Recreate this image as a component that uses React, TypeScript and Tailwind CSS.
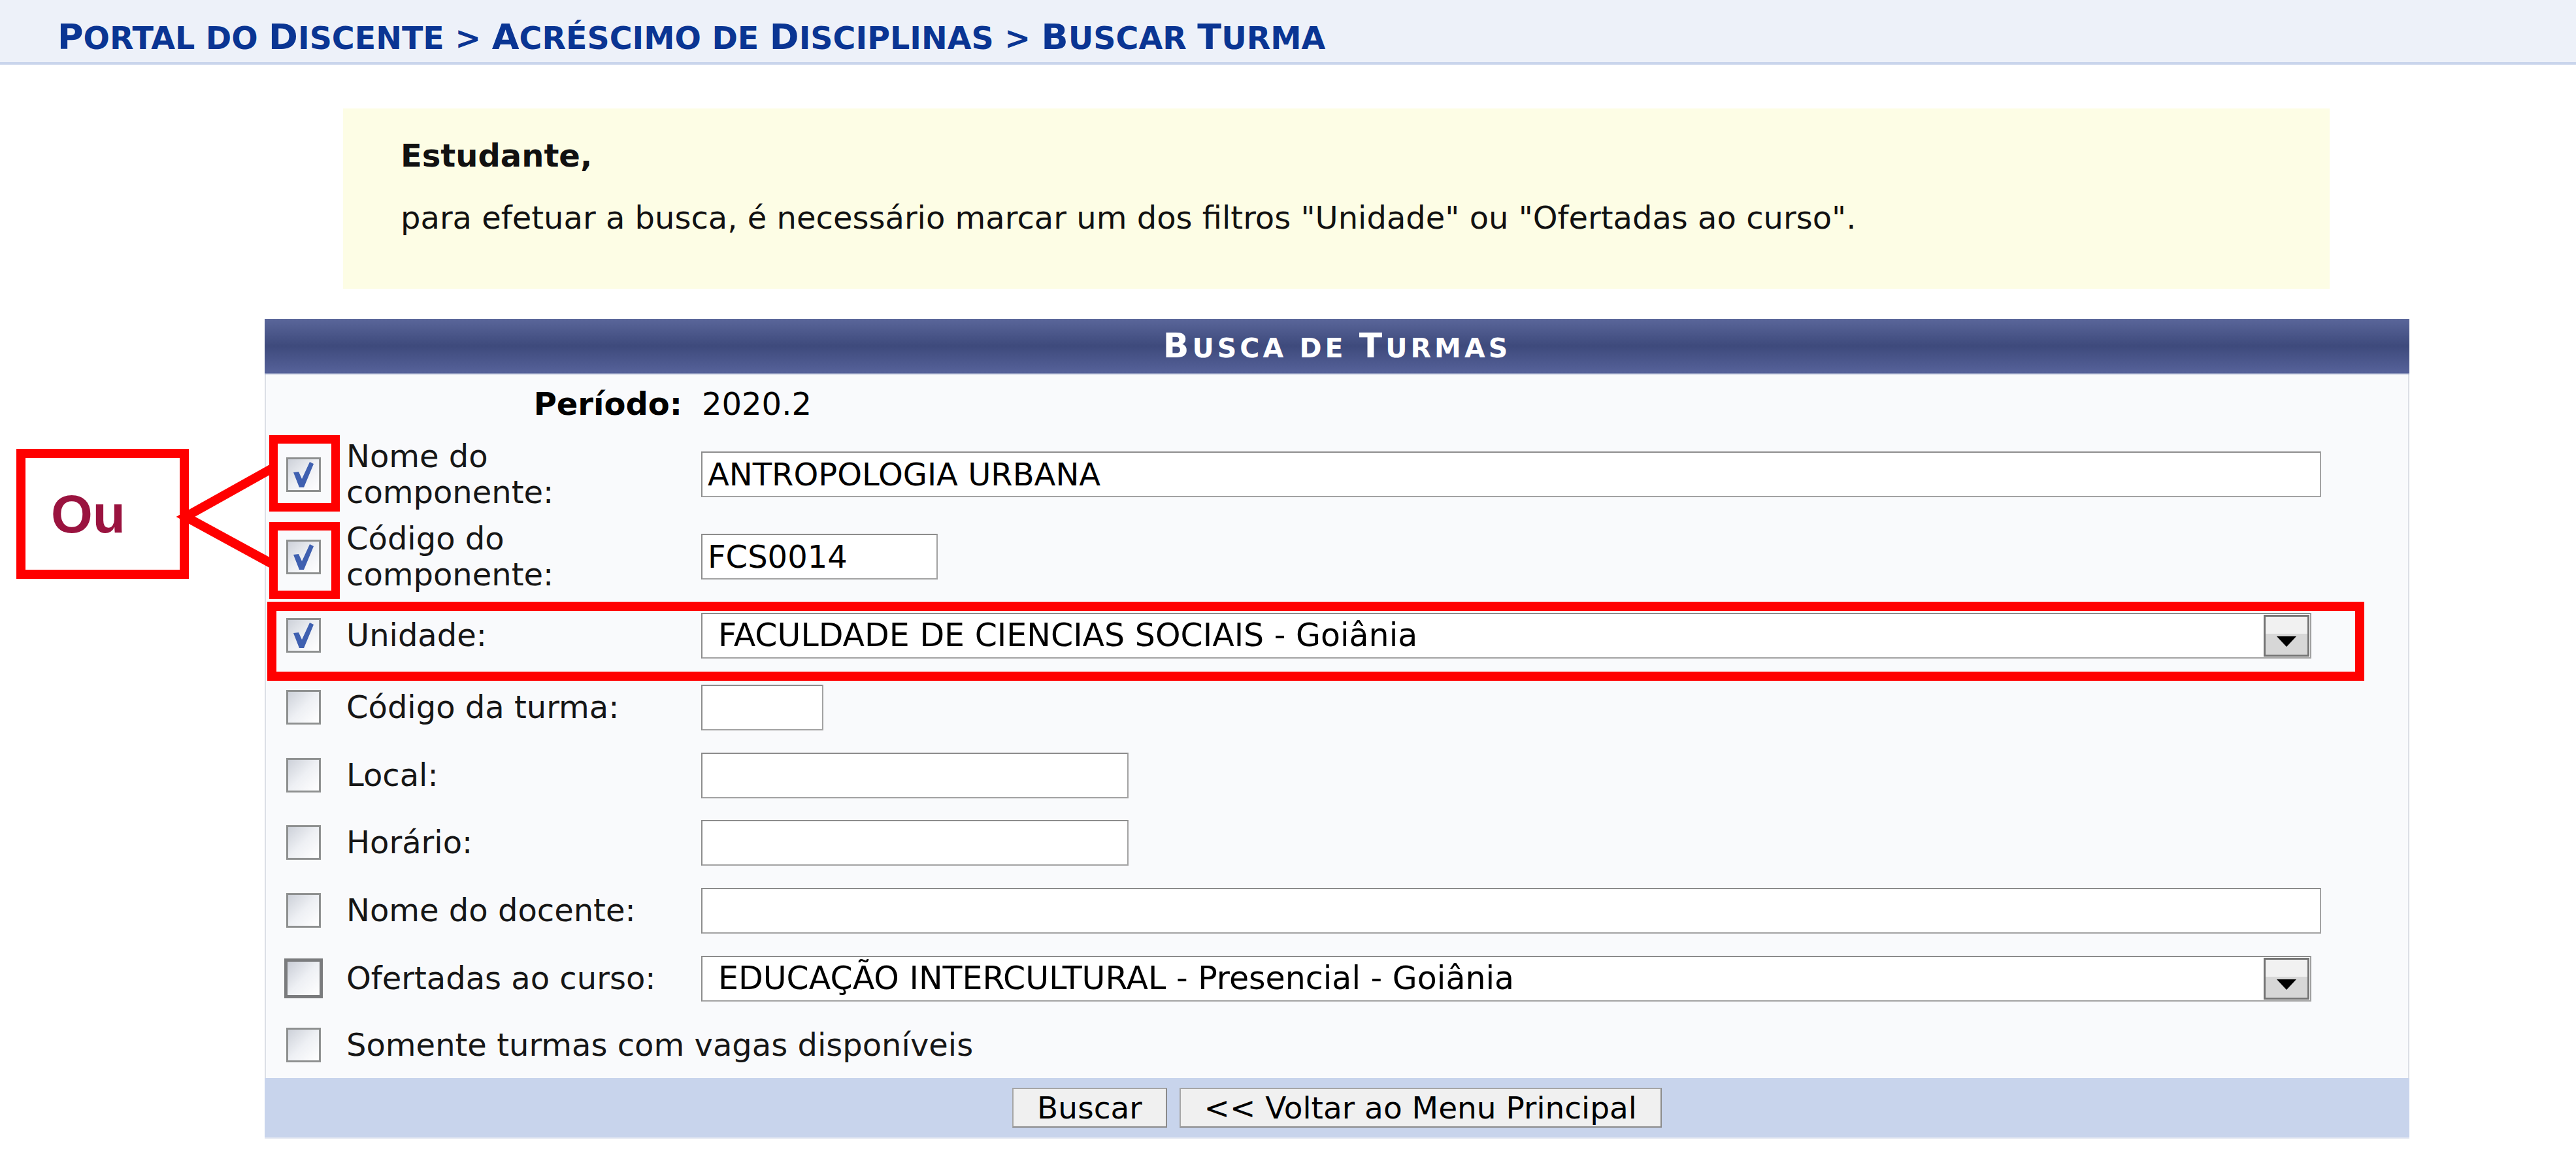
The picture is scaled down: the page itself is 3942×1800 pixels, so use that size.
import React from "react";

// small caps made by hand: capitals stay big, the rest become smaller capitals
function SmallCaps({ text, big, small }: { text: string; big: string; small: string }) {
  return (
    <>
      {text.split("").map((ch, i) =>
        ch !== ch.toLowerCase() ? (
          <span key={i} className={big}>
            {ch}
          </span>
        ) : (
          <span key={i} className={small}>
            {ch.toUpperCase()}
          </span>
        )
      )}
    </>
  );
}

function Check({ checked, focus }: { checked?: boolean; focus?: boolean }) {
  return (
    <div className="w-[53px] flex justify-center shrink-0">
      <div
        className={
          focus
            ? "relative shrink-0 w-[59px] h-[61px] border-[5px] border-[#7A7B7D] bg-gradient-to-br from-[#C9CDD6] via-[#EEF0F4] to-white"
            : "relative shrink-0 w-[53px] h-[53px] border-[3px] border-[#8E9090] bg-gradient-to-br from-[#CDD1D9] via-[#EEF0F4] to-white"
        }
      >
        {checked && (
          <svg viewBox="0 0 47 47" className="absolute inset-0 w-full h-full">
            <polygon points="8,20 16,19 21,30 33,4 39,7 24,43 17,43" fill="#3F60B0" />
          </svg>
        )}
      </div>
    </div>
  );
}

function TextInput({ width, value }: { width: string; value?: string }) {
  return (
    <div className={`${width} h-[70px] shrink-0 bg-white border-2 border-[#A2A2A2] border-t-[#8C8C8C] border-l-[#8C8C8C] flex items-center pl-[8px] text-[48px] text-black`}>
      {value}
    </div>
  );
}

function Select({ value }: { value: string }) {
  return (
    <div className="w-[2464px] h-[70px] shrink-0 bg-white border-2 border-[#A2A2A2] border-t-[#8C8C8C] border-l-[#8C8C8C] flex items-center">
      <div className="flex-1 pl-[24px] text-[49px] text-black whitespace-nowrap">{value}</div>
      <div className="w-[70px] h-[64px] mr-[1px] border-[3px] border-[#747474] flex flex-col">
        <div className="h-[26px] bg-[#F1F1F1]" />
        <div className="flex-1 bg-[#D7D7D7] flex items-start justify-center pt-[4px]">
          <svg width="30" height="16" viewBox="0 0 30 16">
            <polygon points="0,0 30,0 15,16" fill="#000" />
          </svg>
        </div>
      </div>
    </div>
  );
}

function Row({ h, children }: { h: string; children: React.ReactNode }) {
  return <div className={`flex items-center pl-[31px] ${h}`}>{children}</div>;
}

function Label({ children }: { children: React.ReactNode }) {
  return <div className="ml-[39px] w-[520px] mr-[23px] shrink-0 text-[48px] leading-[55px] text-[#161616]">{children}</div>;
}

export default function App() {
  return (
    <div className="relative w-[3942px] min-h-screen bg-white font-['DejaVu_Sans',Verdana,sans-serif] text-black">
      {/* breadcrumb */}
      <div className="h-[99px] bg-[#EDF1F9] border-b-[4px] border-[#C9D5EC] pl-[88px] pt-[27px]">
        <div className="font-bold text-[54px] leading-[60px] text-[#0A3593] whitespace-nowrap">
          <SmallCaps text="Portal do Discente > Acréscimo de Disciplinas > Buscar Turma" big="text-[54px]" small="text-[47.5px]" />
        </div>
      </div>

      {/* aviso */}
      <div className="ml-[525px] mt-[67px] w-[3040px] h-[276px] bg-[#FDFDE5] pl-[88px] pt-[44px] text-[48px] leading-[56px] text-[#111]">
        <div className="font-bold">Estudante,</div>
        <div className="mt-[39px]">
          para efetuar a busca, é necessário marcar um dos filtros "Unidade" ou "Ofertadas ao curso".
        </div>
      </div>

      {/* formulario */}
      <div className="ml-[405px] mt-[46px] w-[3282px]">
        <div className="h-[85px] bg-gradient-to-b from-[#5A669A] via-[#3E4A7C] to-[#56629A] border-b-2 border-[#8C96BC] text-center text-white font-bold text-[52px] leading-[83px] tracking-[5px]">
          <SmallCaps text="Busca de Turmas" big="text-[52px]" small="text-[41px]" />
        </div>
        <div className="bg-[#F9FAFC] border-x-2 border-[#DCDFE6]">
          <div className="flex items-center h-[90px] text-[48px]">
            <div className="w-[637px] text-right font-bold">Período:</div>
            <div className="ml-[30px]">2020.2</div>
          </div>
          <Row h="h-[126px]">
            <Check checked />
            <Label>Nome do componente:</Label>
            <TextInput width="w-[2479px]" value="ANTROPOLOGIA URBANA" />
          </Row>
          <Row h="h-[126px]">
            <Check checked />
            <Label>Código do componente:</Label>
            <TextInput width="w-[362px]" value="FCS0014" />
          </Row>
          <Row h="h-[115px]">
            <Check checked />
            <Label>Unidade:</Label>
            <Select value="FACULDADE DE CIENCIAS SOCIAIS - Goiânia" />
          </Row>
          <Row h="h-[105px]">
            <Check />
            <Label>Código da turma:</Label>
            <TextInput width="w-[187px]" />
          </Row>
          <Row h="h-[103px]">
            <Check />
            <Label>Local:</Label>
            <TextInput width="w-[654px]" />
          </Row>
          <Row h="h-[103px]">
            <Check />
            <Label>Horário:</Label>
            <TextInput width="w-[654px]" />
          </Row>
          <Row h="h-[105px]">
            <Check />
            <Label>Nome do docente:</Label>
            <TextInput width="w-[2479px]" />
          </Row>
          <Row h="h-[103px]">
            <Check focus />
            <Label>Ofertadas ao curso:</Label>
            <Select value="EDUCAÇÃO INTERCULTURAL - Presencial - Goiânia" />
          </Row>
          <Row h="h-[101px]">
            <Check />
            <div className="ml-[39px] text-[48px] leading-[55px] text-[#161616] whitespace-nowrap">
              Somente turmas com vagas disponíveis
            </div>
          </Row>
        </div>
        <div className="h-[93px] bg-[#C8D4EC] border-b-2 border-[#E6EAF2] flex items-center justify-center gap-[19px]">
          <button className="h-[61px] px-[36px] bg-[#F0F0F0] border-2 border-[#A6A6A6] border-b-[#8A8A8A] border-r-[#8A8A8A] text-[47px] leading-none text-black">
            Buscar
          </button>
          <button className="h-[61px] px-[36px] bg-[#F0F0F0] border-2 border-[#A6A6A6] border-b-[#8A8A8A] border-r-[#8A8A8A] text-[47px] leading-none text-black">
            &lt;&lt; Voltar ao Menu Principal
          </button>
        </div>
      </div>

      {/* anotações em vermelho */}
      <div className="absolute left-[25px] top-[687px] w-[264px] h-[199px] border-[14px] border-[#FF0000] flex items-center pl-[39px]">
        <span className="font-['Liberation_Sans',Arial,sans-serif] font-bold text-[82px] leading-none text-[#9A133F]">Ou</span>
      </div>
      <div className="absolute left-[412px] top-[666px] w-[108px] h-[117px] border-[13px] border-[#FF0000]" />
      <div className="absolute left-[412px] top-[799px] w-[108px] h-[118px] border-[13px] border-[#FF0000]" />
      <div className="absolute left-[409px] top-[921px] w-[3209px] h-[121px] border-[14px] border-[#FF0000]" />
      <svg className="absolute left-0 top-0 pointer-events-none" width="3942" height="1800">
        <polyline points="418,716 284,791 418,864" fill="none" stroke="#FF0000" strokeWidth="14" strokeLinejoin="miter" />
      </svg>
    </div>
  );
}
